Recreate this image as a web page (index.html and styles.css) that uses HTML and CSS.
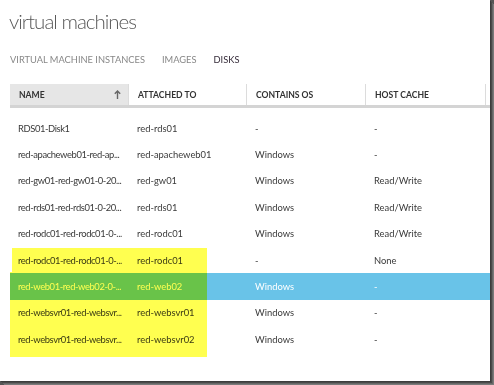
FILE: index.html
```html
<!DOCTYPE html>
<html lang="en">
<head>
    <meta charset="UTF-8">
    <title>virtual machines</title>
    <link rel="stylesheet" href="styles.css">
</head>
<body>
    <div class="frame">
        <h1 class="title">virtual machines</h1>

        <nav class="tabs">
            <span class="tab">VIRTUAL MACHINE INSTANCES</span>
            <span class="tab">IMAGES</span>
            <span class="tab active">DISKS</span>
        </nav>

        <div class="grid">
            <div class="head">
                <div class="th sorted">NAME
                    <svg class="sort" width="7" height="9" viewBox="0 0 7 9">
                        <path d="M3.5 1V9M0.8 3.8L3.5 1L6.2 3.8" fill="none" stroke="#666" stroke-width="1.4"/>
                    </svg>
                </div>
                <div class="th">ATTACHED TO</div>
                <div class="th">CONTAINS OS</div>
                <div class="th">HOST CACHE</div>
                <div class="th"></div>
            </div>

            <div class="rows">
                <div class="row"><span>RDS01-Disk1</span><span>red-rds01</span><span>-</span><span>-</span></div>
                <div class="row"><span>red-apacheweb01-red-ap...</span><span>red-apacheweb01</span><span>Windows</span><span>-</span></div>
                <div class="row"><span>red-gw01-red-gw01-0-20...</span><span>red-gw01</span><span>Windows</span><span>Read/Write</span></div>
                <div class="row"><span>red-rds01-red-rds01-0-20...</span><span>red-rds01</span><span>Windows</span><span>Read/Write</span></div>
                <div class="row"><span>red-rodc01-red-rodc01-0-...</span><span>red-rodc01</span><span>Windows</span><span>Read/Write</span></div>
                <div class="row"><span>red-rodc01-red-rodc01-0-...</span><span>red-rodc01</span><span>-</span><span>None</span></div>
                <div class="row selected"><span>red-web01-red-web02-0-...</span><span>red-web02</span><span>Windows</span><span>-</span></div>
                <div class="row"><span>red-websvr01-red-websvr...</span><span>red-websvr01</span><span>Windows</span><span>-</span></div>
                <div class="row"><span>red-websvr01-red-websvr...</span><span>red-websvr02</span><span>Windows</span><span>-</span></div>
            </div>
        </div>

        <!-- marker highlight drawn over the list -->
        <div class="marker">
            <div class="mark-top"></div>
            <div class="mark-bottom"></div>
        </div>
    </div>
</body>
</html>
```

FILE: styles.css
```css
html {
    background: #555;
}
body {
    margin: 0;
    width: 494px;
    height: 385px;
    overflow: hidden;
    font-family: Lato, "Noto Sans", sans-serif;
}
.frame {
    position: relative;
    width: 490px;
    height: 381px;
    overflow: hidden;
    background: #fff;
    box-shadow: 1px 1px 0 #3c3c3c, 2px 2px 0 #4a4a4a, 3px 3px 0 #666, 4px 4px 0 #7a7a7a;
}
.title {
    margin: 0;
    padding: 6px 0 0 9px;
    height: 36px;
    font-family: Lato, sans-serif;
    font-weight: 300;
    font-size: 20.5px;
    line-height: 30px;
    letter-spacing: -1px;
    color: #585858;
}
.tabs {
    display: flex;
    gap: 17px;
    padding: 12px 0 0 10px;
    height: 36px;
    box-sizing: border-box;
    font-size: 9.3px;
    color: #888;
}
.tab.active {
    color: #362c3a;
}
.grid {
    margin-top: 6px;
    margin-left: 10px;
}
.head {
    display: grid;
    grid-template-columns: 119px 118px 119px 120px 120px;
    height: 21px;
    border-bottom: 3px solid #d4d4d4;
    width: 600px;
}
.th {
    display: flex;
    align-items: center;
    padding-left: 9px;
    border-right: 1px solid #dcdcdc;
    font-size: 8.6px;
    font-weight: 700;
    color: #333;
}
.th.sorted {
    background: #e6e6e6;
    justify-content: space-between;
    padding-right: 7px;
}
.rows {
    margin-top: 7px;
}
.row {
    display: grid;
    grid-template-columns: 119px 118px 119px 120px;
    align-items: center;
    height: 26.4px;
    font-size: 9.4px;
    color: #3a3a3a;
    width: 600px;
}
.row span {
    padding-left: 8px;
    white-space: nowrap;
}
.row span:first-child {
    letter-spacing: -0.4px;
}
.row.selected {
    background: #69c3e8;
    color: #fff;
}
.marker {
    mix-blend-mode: multiply;
}
.mark-top {
    position: absolute;
    left: 12px;
    top: 248px;
    width: 195px;
    height: 25px;
    background: #ffff50;
}
.mark-bottom {
    position: absolute;
    left: 10px;
    top: 272px;
    width: 197px;
    height: 85px;
    background: #ffff50;
}
```
